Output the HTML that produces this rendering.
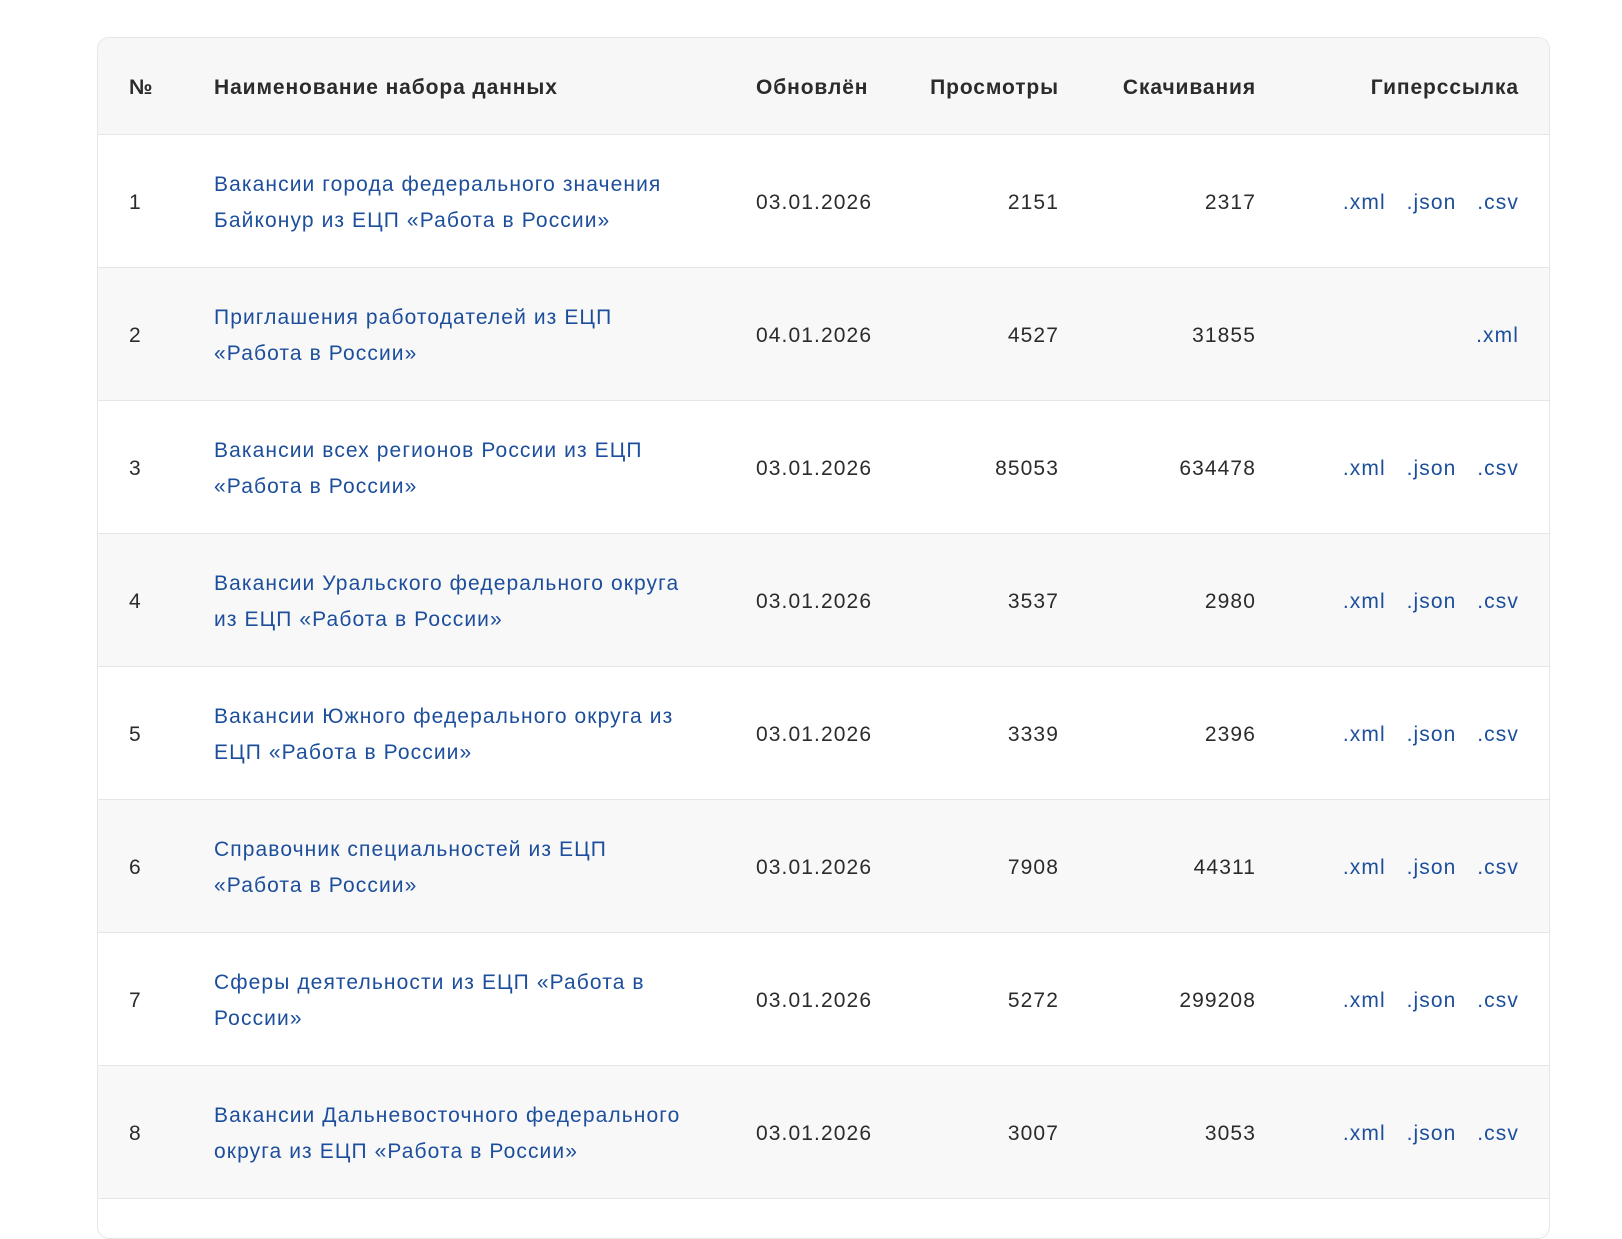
<!DOCTYPE html>
<html><head><meta charset="utf-8"><style>
html,body{margin:0;padding:0;background:#fff;width:1622px;height:1156px;overflow:hidden}
body{font-family:"Liberation Sans",sans-serif;color:#2b2b2b;font-size:21px;letter-spacing:1.1px}
.t{position:absolute;left:97px;top:37px;width:1451px;height:1200px;border:1px solid #e6e6e6;border-radius:12px;overflow:hidden;background:#fff}
.r{position:absolute;left:0;width:1451px;border-bottom:1px solid #e6e6e6}
.h{top:0;height:96px;background:#f7f7f7;font-weight:bold;letter-spacing:0.9px}
.c{position:absolute;white-space:nowrap}
.g{background:#f8f8f8}
a{color:#1c4e9c;text-decoration:none}
.n{line-height:36px}
.r>.c{margin-top:2px}
</style></head><body>
<div class="t">
<div class="r h">
<span class="c" style="left:31px;top:36px">№</span>
<span class="c" style="left:116px;top:36px">Наименование набора данных</span>
<span class="c" style="left:658px;top:36px">Обновлён</span>
<span class="c" style="right:490px;top:36px">Просмотры</span>
<span class="c" style="right:293px;top:36px">Скачивания</span>
<span class="c" style="right:30px;top:36px">Гиперссылка</span>
</div>
<div class="r" style="top:97px;height:132px">
<span class="c" style="left:31px;top:54px">1</span>
<span class="c n" style="left:116px;top:30px"><a>Вакансии города федерального значения<br>Байконур из ЕЦП «Работа в России»</a></span>
<span class="c" style="left:658px;top:54px">03.01.2026</span>
<span class="c" style="right:490px;top:54px">2151</span>
<span class="c" style="right:293px;top:54px">2317</span>
<span class="c" style="right:30px;top:54px"><a>.xml</a>&nbsp;&nbsp;&nbsp;<a>.json</a>&nbsp;&nbsp;&nbsp;<a>.csv</a></span>
</div>
<div class="r g" style="top:230px;height:132px">
<span class="c" style="left:31px;top:54px">2</span>
<span class="c n" style="left:116px;top:30px"><a>Приглашения работодателей из ЕЦП<br>«Работа в России»</a></span>
<span class="c" style="left:658px;top:54px">04.01.2026</span>
<span class="c" style="right:490px;top:54px">4527</span>
<span class="c" style="right:293px;top:54px">31855</span>
<span class="c" style="right:30px;top:54px"><a>.xml</a></span>
</div>
<div class="r" style="top:363px;height:132px">
<span class="c" style="left:31px;top:54px">3</span>
<span class="c n" style="left:116px;top:30px"><a>Вакансии всех регионов России из ЕЦП<br>«Работа в России»</a></span>
<span class="c" style="left:658px;top:54px">03.01.2026</span>
<span class="c" style="right:490px;top:54px">85053</span>
<span class="c" style="right:293px;top:54px">634478</span>
<span class="c" style="right:30px;top:54px"><a>.xml</a>&nbsp;&nbsp;&nbsp;<a>.json</a>&nbsp;&nbsp;&nbsp;<a>.csv</a></span>
</div>
<div class="r g" style="top:496px;height:132px">
<span class="c" style="left:31px;top:54px">4</span>
<span class="c n" style="left:116px;top:30px"><a>Вакансии Уральского федерального округа<br>из ЕЦП «Работа в России»</a></span>
<span class="c" style="left:658px;top:54px">03.01.2026</span>
<span class="c" style="right:490px;top:54px">3537</span>
<span class="c" style="right:293px;top:54px">2980</span>
<span class="c" style="right:30px;top:54px"><a>.xml</a>&nbsp;&nbsp;&nbsp;<a>.json</a>&nbsp;&nbsp;&nbsp;<a>.csv</a></span>
</div>
<div class="r" style="top:629px;height:132px">
<span class="c" style="left:31px;top:54px">5</span>
<span class="c n" style="left:116px;top:30px"><a>Вакансии Южного федерального округа из<br>ЕЦП «Работа в России»</a></span>
<span class="c" style="left:658px;top:54px">03.01.2026</span>
<span class="c" style="right:490px;top:54px">3339</span>
<span class="c" style="right:293px;top:54px">2396</span>
<span class="c" style="right:30px;top:54px"><a>.xml</a>&nbsp;&nbsp;&nbsp;<a>.json</a>&nbsp;&nbsp;&nbsp;<a>.csv</a></span>
</div>
<div class="r g" style="top:762px;height:132px">
<span class="c" style="left:31px;top:54px">6</span>
<span class="c n" style="left:116px;top:30px"><a>Справочник специальностей из ЕЦП<br>«Работа в России»</a></span>
<span class="c" style="left:658px;top:54px">03.01.2026</span>
<span class="c" style="right:490px;top:54px">7908</span>
<span class="c" style="right:293px;top:54px">44311</span>
<span class="c" style="right:30px;top:54px"><a>.xml</a>&nbsp;&nbsp;&nbsp;<a>.json</a>&nbsp;&nbsp;&nbsp;<a>.csv</a></span>
</div>
<div class="r" style="top:895px;height:132px">
<span class="c" style="left:31px;top:54px">7</span>
<span class="c n" style="left:116px;top:30px"><a>Сферы деятельности из ЕЦП «Работа в<br>России»</a></span>
<span class="c" style="left:658px;top:54px">03.01.2026</span>
<span class="c" style="right:490px;top:54px">5272</span>
<span class="c" style="right:293px;top:54px">299208</span>
<span class="c" style="right:30px;top:54px"><a>.xml</a>&nbsp;&nbsp;&nbsp;<a>.json</a>&nbsp;&nbsp;&nbsp;<a>.csv</a></span>
</div>
<div class="r g" style="top:1028px;height:132px">
<span class="c" style="left:31px;top:54px">8</span>
<span class="c n" style="left:116px;top:30px"><a>Вакансии Дальневосточного федерального<br>округа из ЕЦП «Работа в России»</a></span>
<span class="c" style="left:658px;top:54px">03.01.2026</span>
<span class="c" style="right:490px;top:54px">3007</span>
<span class="c" style="right:293px;top:54px">3053</span>
<span class="c" style="right:30px;top:54px"><a>.xml</a>&nbsp;&nbsp;&nbsp;<a>.json</a>&nbsp;&nbsp;&nbsp;<a>.csv</a></span>
</div>
</div>
</body></html>
